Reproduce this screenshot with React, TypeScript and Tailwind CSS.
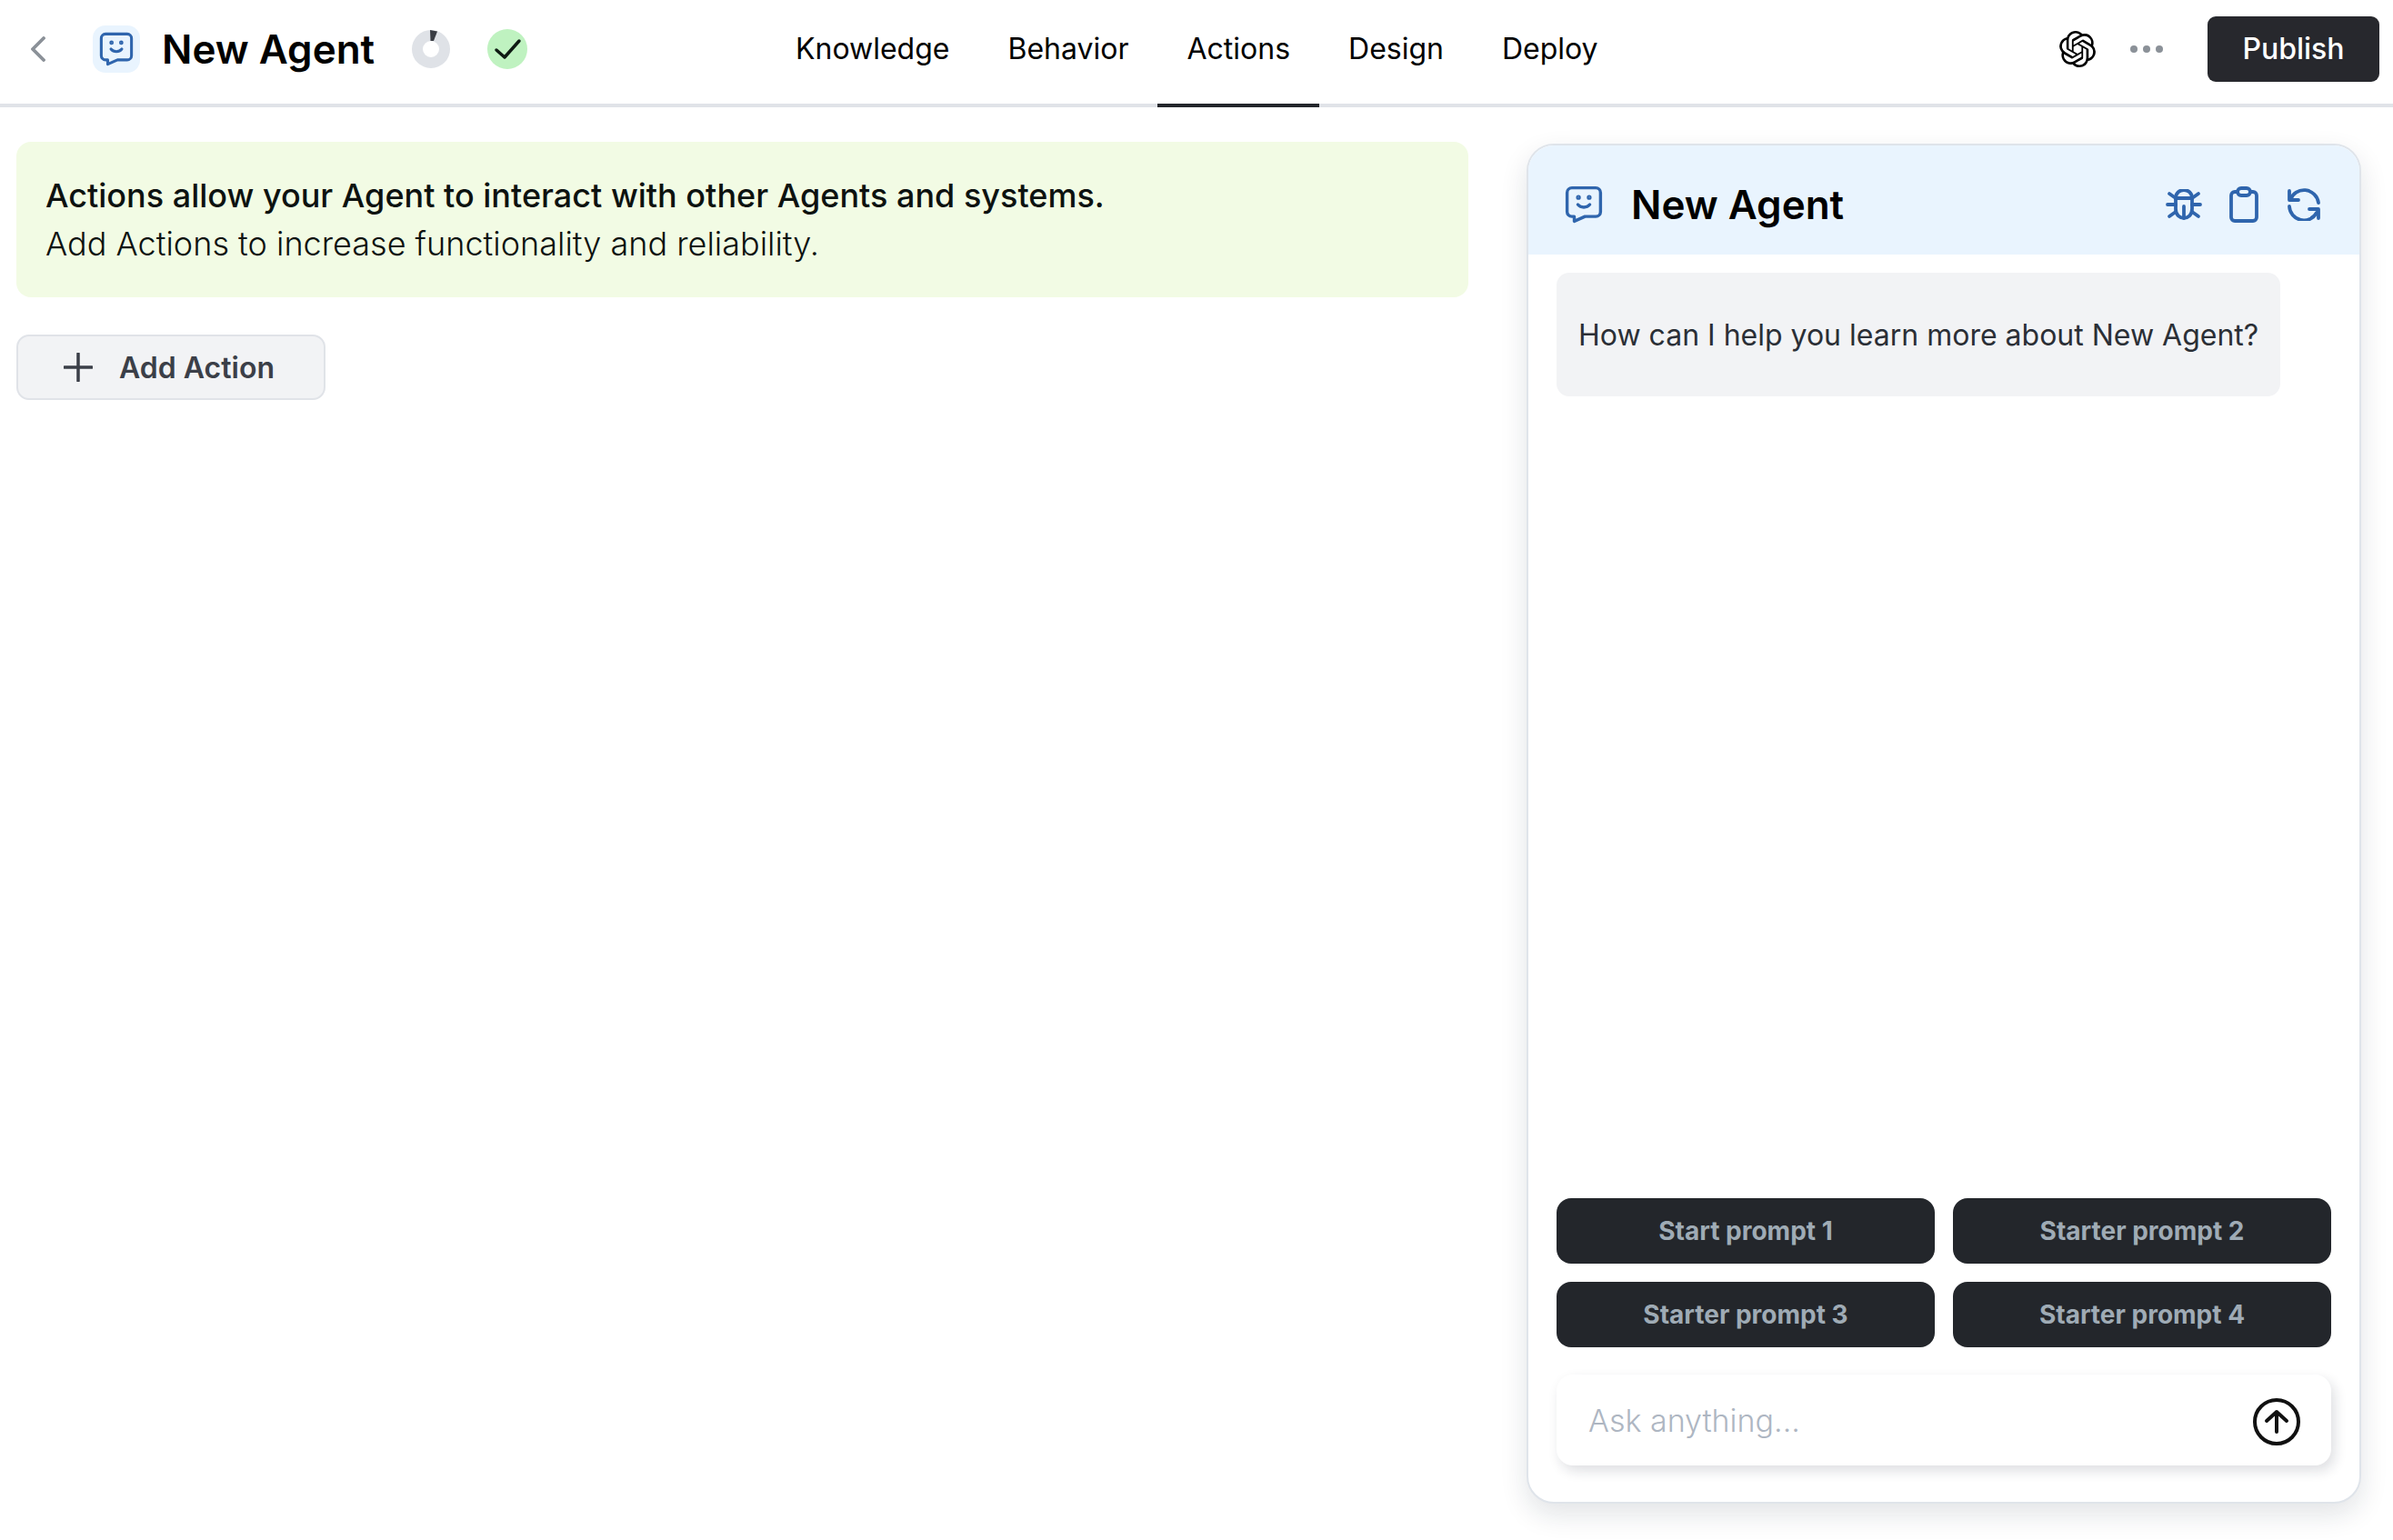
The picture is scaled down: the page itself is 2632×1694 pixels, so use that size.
import { SiOpenai } from "react-icons/si";

const tabs = ["Knowledge", "Behavior", "Actions", "Design", "Deploy"];
const prompts = ["Start prompt 1", "Starter prompt 2", "Starter prompt 3", "Starter prompt 4"];

const AgentIcon = ({ className }: { className: string }) => {
  return (
    <svg viewBox="0 0 32 32" fill="none" stroke="currentColor" strokeWidth="2.600" strokeLinecap="round" strokeLinejoin="round" className={className}>
      <path d="M6 2h20a4 4 0 0 1 4 4v16a4 4 0 0 1-4 4H17l-9 4v-4H6a4 4 0 0 1-4-4V6a4 4 0 0 1 4-4z" />
      <path d="M11 16c2.500 3 7.500 3 10 0" />
      <circle cx="11.500" cy="10" r="0.700" fill="currentColor" />
      <circle cx="20.500" cy="10" r="0.700" fill="currentColor" />
    </svg>
  );
};

const BugIcon = () => {
  return (
    <svg viewBox="0 0 40 34" fill="none" stroke="currentColor" strokeWidth="3.800" strokeLinecap="round" strokeLinejoin="round" className="h-[34px] w-[40px]">
      <path d="M11 10c0-12 18-12 18 0v12c0 13-18 13-18 0z" />
      <path d="M11 10h18" />
      <path d="M20 19v13" />
      <path d="M11 10L4 5M29 10l7-5M11 17H2M29 17h9M11 25l-7 5M29 25l7 5" />
    </svg>
  );
};

const ClipboardIcon = () => {
  return (
    <svg viewBox="0 0 32 40" fill="none" stroke="currentColor" strokeWidth="3.800" strokeLinecap="round" strokeLinejoin="round" className="h-[40px] w-[32px]">
      <path d="M9 6H6a4 4 0 0 0-4 4v24a4 4 0 0 0 4 4h20a4 4 0 0 0 4-4V10a4 4 0 0 0-4-4h-3" />
      <rect x="9" y="2" width="14" height="8" rx="4" />
    </svg>
  );
};

const RefreshIcon = () => {
  return (
    <svg viewBox="0 0 36 36" fill="none" stroke="currentColor" strokeWidth="3.800" strokeLinecap="round" strokeLinejoin="round" className="ml-[2px] h-[36px] w-[36px]">
      <path d="M3 13A16 16 0 0 1 34 16" />
      <path d="M2 20a16 16 0 0 0 30 7" />
      <path d="M2 3v10h10M34 33V23H24" />
    </svg>
  );
};

const App = () => {
  return (
    <div className="flex h-[1694px] w-[2632px] flex-col overflow-hidden bg-white font-['Inter',sans-serif] text-black">
      <header className="relative flex h-[118px] shrink-0 items-center border-b-[4px] border-[#e0e3e8] pb-[6px]">
        <svg viewBox="0 0 16 28" fill="none" stroke="#8b9198" strokeWidth="3.800" strokeLinecap="round" strokeLinejoin="round" className="ml-[34px] h-[28px] w-[16px]">
          <path d="M14 2L2 14l12 12" />
        </svg>
        <div className="ml-[52px] flex h-[52px] w-[52px] items-center justify-center rounded-[14px] bg-[#e9f4fe] text-[#2f65ad]">
          <AgentIcon className="h-[38px] w-[38px]" />
        </div>
        <h1 className="ml-[24px] w-[233px] text-[44px] leading-none font-semibold whitespace-nowrap">New Agent</h1>
        <svg viewBox="0 0 42 42" className="ml-[42px] h-[42px] w-[42px]">
          <circle cx="21" cy="21" r="15" fill="none" stroke="#dfe2e7" strokeWidth="12" />
          <path d="M20 0l8 1.500L24 12h-3.500z" fill="#3a3d44" />
        </svg>
        <div className="ml-[41px] flex h-[44px] w-[44px] items-center justify-center rounded-full bg-[#bff2c0]">
          <svg viewBox="0 0 44 44" fill="none" stroke="#0e1a12" strokeWidth="3.500" strokeLinecap="round" strokeLinejoin="round" className="h-[44px] w-[44px]">
            <path d="M10 23l9 8L35 13" />
          </svg>
        </div>
        <nav className="absolute top-0 left-[875px] flex h-[118px] gap-[64px]">
          {tabs.map((tab) => (
            <div
              key={tab}
              className={
                tab === "Actions"
                  ? "-mx-[32px] flex h-[118px] items-center border-b-[4px] border-[#23262b] px-[32px] pb-[6px] text-[32px]"
                  : "flex h-[118px] items-center border-b-[4px] border-transparent pb-[6px] text-[32px]"
              }
            >
              {tab}
            </div>
          ))}
        </nav>
        <div className="ml-auto flex items-center">
          <SiOpenai className="h-[40px] w-[40px] text-black" />
          <div className="mr-[49px] ml-[38px] flex gap-[6px]">
            <span className="h-[8px] w-[8px] rounded-full bg-[#8b9198]" />
            <span className="h-[8px] w-[8px] rounded-full bg-[#8b9198]" />
            <span className="h-[8px] w-[8px] rounded-full bg-[#8b9198]" />
          </div>
          <button className="mr-[15px] h-[72px] w-[189px] rounded-[9px] bg-[#27282d] text-[32px] font-medium text-white">Publish</button>
        </div>
      </header>

      <main className="flex min-h-0 flex-1">
        <section className="w-[1615px] shrink-0 pt-[38px] pl-[18px]">
          <div className="flex h-[171px] flex-col justify-center rounded-[16px] bg-[#f2fbe4] pt-[1px] pl-[32px] text-[36px] leading-[53px]">
            <p className="font-medium text-[#0d1210]">Actions allow your Agent to interact with other Agents and systems.</p>
            <p className="font-light text-[#0d1210]">Add Actions to increase functionality and reliability.</p>
          </div>
          <button className="mt-[41px] flex h-[72px] w-[340px] items-center rounded-[14px] border-2 border-[#e0e3e8] bg-[#f2f3f5] pl-[50px] text-[32px] font-semibold text-[#3b3f48]">
            <svg viewBox="0 0 32 32" fill="none" stroke="currentColor" strokeWidth="3.500" strokeLinecap="round" className="h-[32px] w-[32px]">
              <path d="M16 1v30M1 16h30" />
            </svg>
            <span className="ml-[29px] pt-[2px]">Add Action</span>
          </button>
        </section>

        <aside className="mt-[40px] mb-[40px] ml-[64px] flex w-[918px] shrink-0 flex-col overflow-hidden rounded-[30px] border-2 border-[#dfe4ea] bg-white shadow-[0_12px_30px_rgba(20,30,50,0.12)]">
          <div className="flex h-[120px] shrink-0 items-center bg-[#e9f4fe] pt-[10px] pl-[40px] text-[#2f65ad]">
            <AgentIcon className="h-[42px] w-[42px]" />
            <h2 className="ml-[31px] text-[44px] leading-none font-semibold whitespace-nowrap text-black">New Agent</h2>
            <div className="mr-[43px] ml-auto flex items-center gap-[30px]">
              <BugIcon />
              <ClipboardIcon />
              <RefreshIcon />
            </div>
          </div>
          <div className="flex min-h-0 flex-1 flex-col px-[31px] pt-[20px] pb-[40px]">
            <div className="flex h-[136px] w-[796px] items-center rounded-[14px] bg-[#f2f3f5] pt-[2px] pl-[24px] text-[32px] text-[#2b2f36]">
              How can I help you learn more about New Agent?
            </div>
            <div className="mt-auto grid grid-cols-2 gap-x-[20px] gap-y-[20px]">
              {prompts.map((prompt) => (
                <button key={prompt} className="h-[72px] rounded-[16px] bg-[#23262b] text-[28px] font-bold text-[#9fabb5]">
                  {prompt}
                </button>
              ))}
            </div>
            <div className="mt-[30px] flex h-[100px] items-center justify-between rounded-[18px] bg-white pr-[34px] pl-[35px] shadow-[4px_6px_14px_rgba(20,30,50,0.14)]">
              <span className="text-[34px] font-light text-[#aeb6c2]">Ask anything...</span>
              <svg viewBox="0 0 52 52" fill="none" stroke="#111" strokeWidth="4" strokeLinecap="round" strokeLinejoin="round" className="mt-[3px] h-[52px] w-[52px]">
                <circle cx="26" cy="26" r="24" />
                <path d="M26 37V15M15 25l11-10 11 10" />
              </svg>
            </div>
          </div>
        </aside>
      </main>
    </div>
  );
};

export default App;
